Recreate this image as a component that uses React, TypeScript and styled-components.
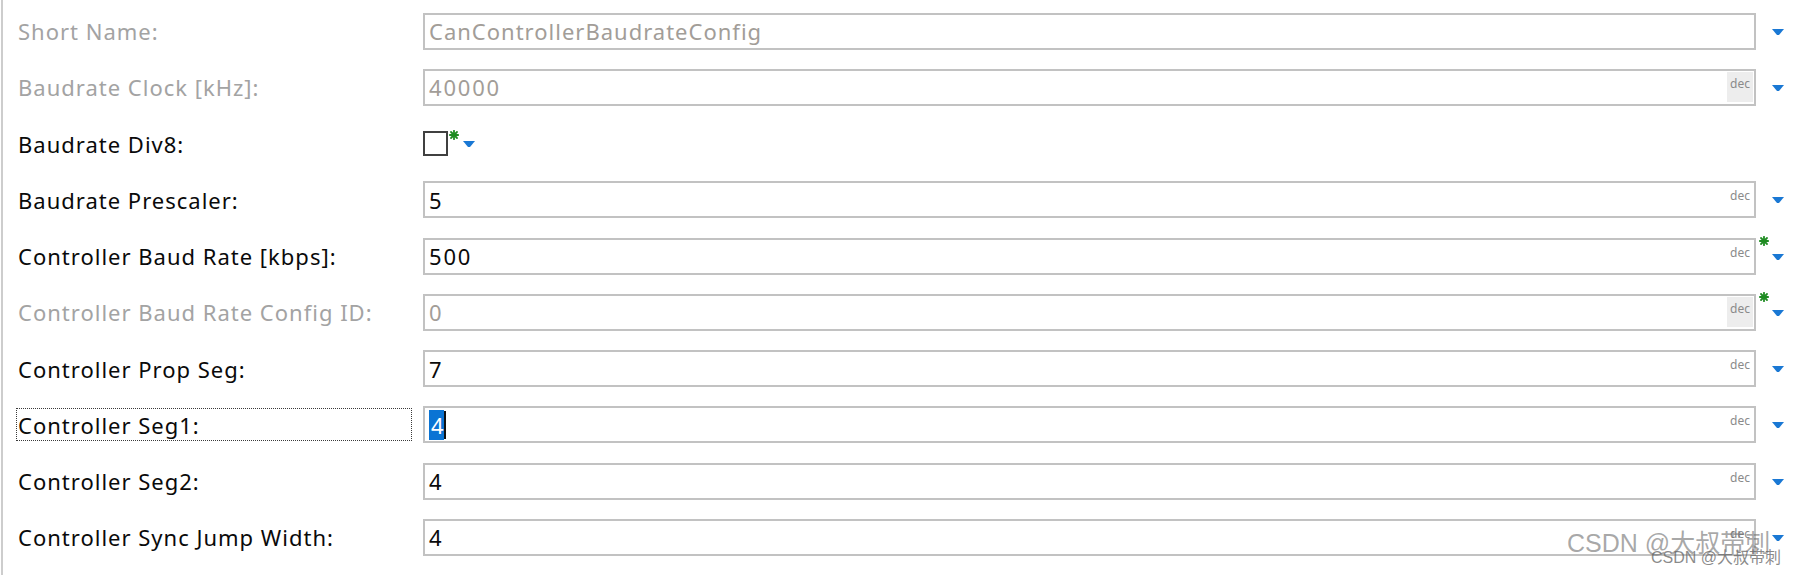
import React from "react";
import styled, { createGlobalStyle } from "styled-components";

const GlobalStyle = createGlobalStyle`
  html, body {
    margin: 0;
    padding: 0;
    background: #ffffff;
  }
  body {
    font-family: "Noto Sans", "Open Sans", "Noto Sans CJK SC", sans-serif;
  }
`;

interface Param {
  label: string;
  value?: string;
  disabled?: boolean;
  tag?: boolean;
  star?: boolean;
  checkbox?: boolean;
  focused?: boolean;
}

const params: Param[] = [
  { label: "Short Name:", value: "CanControllerBaudrateConfig", disabled: true },
  { label: "Baudrate Clock [kHz]:", value: "40000", disabled: true, tag: true },
  { label: "Baudrate Div8:", checkbox: true, star: true },
  { label: "Baudrate Prescaler:", value: "5", tag: true },
  { label: "Controller Baud Rate [kbps]:", value: "500", tag: true, star: true },
  { label: "Controller Baud Rate Config ID:", value: "0", disabled: true, tag: true, star: true },
  { label: "Controller Prop Seg:", value: "7", tag: true },
  { label: "Controller Seg1:", value: "4", tag: true, focused: true },
  { label: "Controller Seg2:", value: "4", tag: true },
  { label: "Controller Sync Jump Width:", value: "4", tag: true },
];

function Star({ hidden }: { hidden?: boolean }) {
  return (
    <StarMark $hidden={hidden} width="10" height="10" viewBox="0 0 10 10">
      <g stroke="#1f8c22" strokeWidth="1.8" strokeLinecap="round">
        <line x1="5" y1="0.8" x2="5" y2="9.2" />
        <line x1="0.8" y1="5" x2="9.2" y2="5" />
        <line x1="2" y1="2" x2="8" y2="8" />
        <line x1="8" y1="2" x2="2" y2="8" />
      </g>
    </StarMark>
  );
}

function Arrow() {
  return (
    <ArrowMark width="12" height="7" viewBox="0 0 12 7">
      <polygon points="0,0 12,0 7,6 5,6" fill="#1a78d4" />
    </ArrowMark>
  );
}

function ParamRow({ p }: { p: Param }) {
  if (p.checkbox) {
    return (
      <Row>
        <Label $disabled={p.disabled} $focused={p.focused}>{p.label}</Label>
        <CheckGroup>
          <CheckBox />
          <Star />
          <Arrow />
        </CheckGroup>
        <span />
      </Row>
    );
  }
  const numeric = /^\d+$/.test(p.value || "");
  return (
    <Row>
      <Label $disabled={p.disabled} $focused={p.focused}>{p.label}</Label>
      <InputBox>
        <Value $disabled={p.disabled} $numeric={numeric}>
          {p.focused ? (
            <>
              <Selected>{p.value}</Selected>
              <Caret />
            </>
          ) : (
            p.value
          )}
        </Value>
        {p.tag && <Tag $shaded={p.disabled}>dec</Tag>}
      </InputBox>
      <Side>
        <Star hidden={!p.star} />
        <Arrow />
      </Side>
    </Row>
  );
}

export default function App() {
  return (
    <>
      <GlobalStyle />
      <Page>
        <Form>
          {params.map((p) => (
            <ParamRow key={p.label} p={p} />
          ))}
        </Form>
        <WatermarkBig>CSDN @大叔带刺</WatermarkBig>
        <WatermarkSmall>CSDN @大叔带刺</WatermarkSmall>
      </Page>
    </>
  );
}

const Page = styled.div`
  position: relative;
  height: 575px;
  margin-left: 1px;
  border-left: 2px solid #cdcdcd;
  overflow: hidden;
`;

const Form = styled.div`
  padding-top: 3px;
  display: flex;
  flex-direction: column;
`;

const Row = styled.div`
  display: grid;
  grid-template-columns: 406px 1333px 1fr;
  align-items: center;
  height: 56.25px;
  padding-left: 14px;
`;

const Label = styled.div<{ $disabled?: boolean; $focused?: boolean }>`
  width: 394px;
  height: 31px;
  box-sizing: border-box;
  padding-left: 1px;
  display: flex;
  align-items: center;
  font-size: 22px;
  letter-spacing: 1px;
  color: ${(p) => (p.$disabled ? "#a3a3a3" : "#0a0a0a")};
  outline: ${(p) => (p.$focused ? "1px dotted #3a3a3a" : "none")};
  white-space: nowrap;
`;

const InputBox = styled.div`
  height: 37px;
  box-sizing: border-box;
  border: 2px solid #c2c2c2;
  background: #ffffff;
  display: flex;
`;

const Value = styled.div<{ $disabled?: boolean; $numeric?: boolean }>`
  flex: 1;
  display: flex;
  align-items: center;
  padding-left: 4px;
  font-size: 22px;
  letter-spacing: ${(p) => (p.$numeric ? "1.8px" : "1px")};
  color: ${(p) => (p.$disabled ? "#a29d98" : "#0a0a0a")};
  white-space: nowrap;
`;

const Selected = styled.span`
  background: #0a74d4;
  color: #ffffff;
  line-height: 30px;
  padding: 0 0 0 2px;
  letter-spacing: 0;
`;

const Caret = styled.span`
  width: 2px;
  height: 28px;
  background: #111111;
`;

const Tag = styled.div<{ $shaded?: boolean }>`
  align-self: stretch;
  margin: 1px 1px 2px 0;
  padding: 5px 3px 0;
  font-size: 12px;
  line-height: 14px;
  letter-spacing: 0;
  color: #8a8a8a;
  background: ${(p) => (p.$shaded ? "#ededed" : "transparent")};
`;

const Side = styled.div`
  display: flex;
  align-items: center;
  height: 37px;
  padding-left: 3px;
`;

const StarMark = styled.svg<{ $hidden?: boolean }>`
  align-self: flex-start;
  margin-top: -2px;
  visibility: ${(p) => (p.$hidden ? "hidden" : "visible")};
  flex-shrink: 0;
`;

const ArrowMark = styled.svg`
  margin-left: 3px;
  margin-top: 2px;
  flex-shrink: 0;
`;

const CheckGroup = styled.div`
  display: flex;
  align-items: center;
  height: 37px;

  ${StarMark} {
    align-self: flex-start;
    margin: 5px 0 0 1px;
  }
  ${ArrowMark} {
    margin-left: 4px;
  }
`;

const CheckBox = styled.div`
  width: 25px;
  height: 25px;
  box-sizing: border-box;
  border: 2px solid #404040;
  background: #ffffff;
`;

const WatermarkBig = styled.div`
  position: absolute;
  left: 1564px;
  top: 531px;
  font-family: "Liberation Sans", "Noto Sans CJK SC", sans-serif;
  font-size: 25px;
  line-height: 25px;
  color: rgba(110, 110, 110, 0.6);
  white-space: nowrap;
  pointer-events: none;
`;

const WatermarkSmall = styled.div`
  position: absolute;
  left: 1648px;
  top: 550px;
  font-family: "Liberation Sans", "Noto Sans CJK SC", sans-serif;
  font-size: 16px;
  line-height: 16px;
  color: rgba(100, 100, 100, 0.75);
  white-space: nowrap;
  pointer-events: none;
`;
